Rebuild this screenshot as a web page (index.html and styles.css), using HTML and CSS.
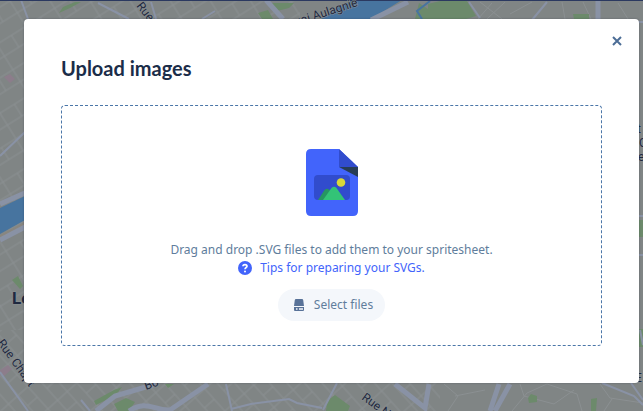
FILE: index.html
```html
<!DOCTYPE html>
<html lang="en">
<head>
<meta charset="utf-8">
<meta name="viewport" content="width=device-width, initial-scale=1">
<title>Upload images</title>
<link rel="stylesheet" href="styles.css">
</head>
<body>
<svg class="map" viewBox="0 0 643 411" preserveAspectRatio="xMidYMid slice" aria-hidden="true">
  <defs>
    <pattern id="streets" width="34" height="30" patternUnits="userSpaceOnUse" patternTransform="rotate(-32)">
      <path class="lane" d="M0 6H34M0 20H34M8 0V30M25 6V20"/>
    </pattern>
    <pattern id="blocks" width="30" height="26" patternUnits="userSpaceOnUse" patternTransform="rotate(48)">
      <path class="lane" d="M0 4H30M0 17H30M6 0V26M20 4V17"/>
    </pattern>
  </defs>
  <rect class="land" width="643" height="411"/>
  <rect fill="url(#streets)" width="300" height="200"/>
  <rect fill="url(#streets)" y="200" width="30" height="130"/>
  <rect fill="url(#blocks)" y="330" width="440" height="81"/>
  <path class="lane" d="M492 3l-14 16M505 2l-18 17M480 2l22 17M510 14l22-12M562 2l3 17M583 2l8 17M618 3l10 16"/>
  <path class="lane" d="M444 384l14 12-10 15M455 396l30-6M512 411l15-18 20-9 30 10 5 17M520 384l4 12 30 8 20-14M600 384l10 14 33 5M612 399l-8 12"/>
  <path class="park" d="M59 13L63 7 75 2H81L70 8ZM258 13l10-3 5 9h-11ZM268 3h26l-5 5-12 3ZM428 4l12-3h27l9 15-10 3h-38ZM419 3l9 6v10h-13ZM573 14h16v5h-15ZM12 280l6-4 5 10-3 3ZM639 329h4v18h-4ZM639 220h4v17h-4ZM94 401l20-11 8-3-6 8-20 10ZM114 404l12-6 9 4-6 9h-11ZM165 384h9l-6 4ZM327 401l8-6 15 11-2 5h-22ZM528 398l3-4 6 2v6l-8 1ZM591 399l6-1-1 13h-5Z"/>
  <path class="hospital" d="M0 370l8-5 4 4-8 7-4-1ZM4 77l6-3 5 5-5 4Z"/>
  <path class="sand" d="M0 235l25-13v3L0 238Z"/>
  <path class="water" d="M0 208l25-12v24L0 234ZM321 19l18-12 14-7h49l-31 19Z"/>
  <path class="water-line" d="M430 1l-13 10 5 8"/>
  <path class="road wide" d="M0 204l27-12M0 240l27-14M266 0l17 19M371 20l37-18"/>
  <path class="road" d="M21 0l7 19M98 3l31 16M151 2l5 17M202 19l13-8M469 2l11 16M547 2l-15 18M636 22h7M0 156l25-24M0 372l28 39M81 400l9 11M323 410l14-27M631 383l12 17M639 216h4M639 255h4M640 330l3 15M602 383l32 13 9 9M226 384l6 27M231 409l20-5 38-5 8 4 25 5"/>
  <path class="road wide" d="M598 0v20M96 411l19-15 41-12M129 411c18-12 25 0 41-1l38-26M395 384l30 24 4-24M490 411l9-27M495 411l15-27"/>
  <path class="header-edge" d="M0 0H643"/>
  <g class="street-name">
    <text transform="translate(136 6) rotate(52)">Rue</text>
    <text transform="translate(296 26) rotate(-18)">uai Aulagnie</text>
    <text transform="translate(-3 343) rotate(54)">Rue Chapt</text>
    <text transform="translate(146 390) rotate(-20)">Bo</text>
    <text transform="translate(361 399) rotate(36)">Rue N</text>
    <text x="637" y="133">t</text>
    <text x="639" y="147">C</text>
    <text x="638" y="161">e</text>
    <text x="635" y="382">E</text>
    <text class="town" x="12" y="304">Le</text>
  </g>
</svg>

<main class="dialog" role="dialog" aria-modal="true" aria-labelledby="dialog-title">
  <header class="dialog-header">
    <h1 id="dialog-title">Upload images</h1>
    <button class="close" type="button" aria-label="Close">
      <svg width="10" height="10" viewBox="0 0 10 10"><path d="M1 1l8 8M9 1l-8 8"/></svg>
    </button>
  </header>
  <section class="dropzone">
    <svg class="file-art" width="52" height="68" viewBox="0 0 52 68" aria-hidden="true">
      <path fill="#4264fb" d="M5 0H33L52 18V62Q52 67 47 67H5Q0 67 0 62V5Q0 0 5 0Z"/>
      <path fill="#314ccd" d="M33 0L52 18H33Z"/>
      <path fill="#273d56" d="M33 18H52V28Z"/>
      <rect fill="#314ccd" x="8" y="26" width="36" height="25" rx="4"/>
      <circle fill="#d9d838" cx="35" cy="33.500" r="4.300"/>
      <path fill="#269561" d="M12 51L18.500 41Q21 38.500 23.500 41L30 51Z"/>
      <path fill="#33c377" d="M17 51L25.500 39Q28 36.500 30.500 39L39 51Z"/>
    </svg>
    <p>Drag and drop .SVG files to add them to your spritesheet.</p>
    <a class="tips" href="#tips">
      <svg width="14" height="14" viewBox="0 0 14 14" aria-hidden="true">
        <circle cx="7" cy="7" r="7" fill="#4264fb"/>
        <path d="M5 5.200C5 3 9 3 9 5.200 9 6.600 7 6.500 7 8.300" fill="none" stroke="#fff" stroke-width="1.700"/>
        <circle cx="7" cy="10.400" r="1" fill="#fff"/>
      </svg>
      <span>Tips for preparing your SVGs.</span>
    </a>
    <button class="select-files" type="button">
      <svg width="10" height="12" viewBox="0 0 10 12" aria-hidden="true">
        <path fill="#587298" d="M2 0H8Q9 0 9.200 1L10 7H0L.8 1Q1 0 2 0ZM0 8H10V11Q10 12 9 12H1Q0 12 0 11Z"/>
        <path fill="#f4f7fb" d="M2 9.300H3.500V10.700H2ZM5 9.300H9V10.700H5Z"/>
      </svg>
      <span>Select files</span>
    </button>
  </section>
</main>
</body>
</html>
```
FILE: styles.css
```css
* {
  box-sizing: border-box;
}

body {
  margin: 0;
  min-height: 100vh;
  padding: 19px 4px 28px 24px;
  display: flex;
  background: #808585;
  color: #607d9c;
  font: 12px/18px "Noto Sans", "Open Sans", sans-serif;
  overflow: hidden;
}

.map {
  position: absolute;
  inset: 0;
  width: 100%;
  height: 100%;
}

.land { fill: #808585; }
.lane { fill: none; stroke: #8b9092; stroke-width: 1; }
.park { fill: #6c8a6b; }
.hospital { fill: #8c7d8b; }
.sand { fill: #89867f; }
.water { fill: #47749f; }
.water-line { fill: none; stroke: #47749f; stroke-width: 2; }
.road { fill: none; stroke: #8992a5; stroke-width: 2; }
.wide { stroke-width: 5; }
.header-edge { stroke: #2b3960; stroke-width: 2; }

.street-name {
  fill: #1f2940;
  stroke: #8a9092;
  stroke-width: 1;
  paint-order: stroke;
  font: 12px/16px Roboto, sans-serif;
}

.town {
  font-size: 17px;
  font-weight: 700;
}

.dialog {
  position: relative;
  flex: 1;
  display: flex;
  flex-direction: column;
  padding: 37px;
  border-radius: 4px;
  background: #fff;
  box-shadow: 0 0 2px rgba(30, 40, 60, 0.4);
}

h1 {
  margin: 0 0 25px;
  color: #1b2d49;
  font: 700 20px/24px Lato, sans-serif;
}

button {
  border: 0;
  cursor: pointer;
  font: inherit;
}

.close {
  position: absolute;
  top: 12px;
  right: 12px;
  width: 20px;
  height: 20px;
  padding: 5px;
  background: none;
}

.close svg {
  display: block;
  fill: none;
  stroke: #4c6d96;
  stroke-width: 2;
}

.dropzone {
  flex: 1;
  display: flex;
  flex-direction: column;
  align-items: center;
  justify-content: center;
  padding-top: 19px;
  border: 1px dashed #4a76a8;
  border-radius: 4px;
}

.file-art {
  margin-bottom: 24px;
}

p {
  margin: 0;
}

.tips {
  display: flex;
  align-items: center;
  gap: 8px;
  color: #4264fb;
  text-decoration: none;
}

.select-files {
  display: flex;
  align-items: center;
  gap: 10px;
  height: 32px;
  margin-top: 12px;
  padding: 0 12px 0 16px;
  border-radius: 16px;
  background: #f4f7fb;
  color: #607d9c;
}
```
